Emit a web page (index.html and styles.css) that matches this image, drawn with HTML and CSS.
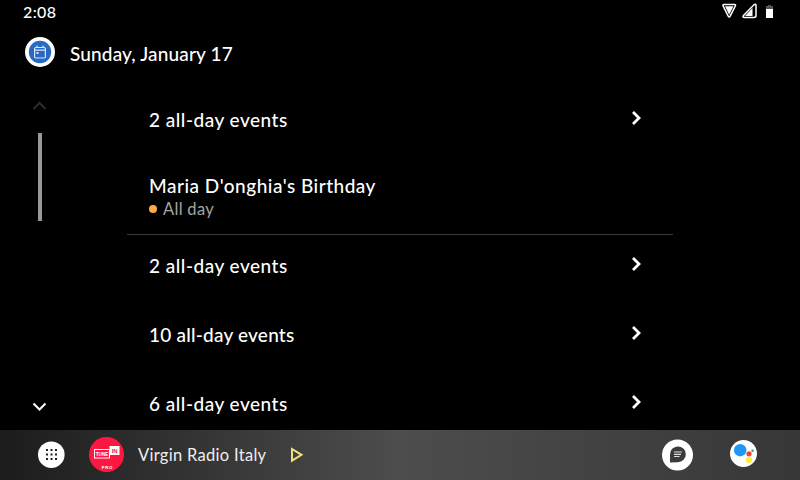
FILE: index.html
```html
<!DOCTYPE html>
<html lang="en">
<head>
<meta charset="utf-8">
<title>Calendar</title>
<link rel="stylesheet" href="styles.css">
</head>
<body>
<div class="screen">
  <header class="status">
    <span class="clock">2:08</span>
    <svg class="status-icons" width="56" height="24" viewBox="720 0 56 24">
      <path d="M724 4.500h10.400q1.800 0 .8 1.700l-5 10q-1 1.800-2 0l-5-10q-.8-1.700.8-1.700z" fill="#000" stroke="#fff" stroke-width="1.500"/>
      <path d="M725 6.200h8.400l-4.200 8.600z" fill="#fff"/>
      <path d="M754 4.700q1.800-1.300 2 .7v10.200q0 1.900-1.900 1.900h-9.600q-2.500-.2-1-2z" fill="#000" stroke="#fff" stroke-width="1.500"/>
      <path d="M745 16l7.500-8v8z" fill="#fff"/>
      <path d="M768 5h3v1h2v3h-7V6h2z" fill="#555"/>
      <path d="M766 9h7v9h-7z" fill="#fff"/>
    </svg>
  </header>
  <div class="title">
    <svg width="30" height="30" viewBox="0 0 30 30">
      <circle cx="15" cy="15" r="15" fill="#fff"/>
      <circle cx="15" cy="15" r="11.200" fill="#2869c1"/>
      <g fill="none" stroke="#d9e8fa" stroke-width="1.200"><rect x="9.600" y="10.500" width="10.800" height="10.500" rx="1.200"/><path d="M9.600 13.200h10.800M12 8.500v2M18 8.500v2"/></g>
      <path d="M11.500 15h2v2h-2z" fill="#d9e8fa"/>
    </svg>
    <h1>Sunday, January 17</h1>
  </div>
  <div class="body">
    <nav class="scroller">
      <svg width="16" height="10" viewBox="0 0 16 10"><path d="M1.500 8l6-6 6 6" fill="none" stroke="#2c2c2c" stroke-width="2"/></svg>
      <div class="thumb"></div>
      <svg class="down" width="16" height="10" viewBox="0 0 16 10"><path d="M1.500 1.500l6 6 6-6" fill="none" stroke="#fff" stroke-width="2"/></svg>
    </nav>
    <main class="events">
      <div class="row"><span class="label">2 all-day events</span><svg class="chevron" viewBox="0 0 12 16"><path d="M2 2l6 6-6 6"/></svg></div>
      <div class="event">
        <div class="label">Maria D'onghia's Birthday</div>
        <div class="when"><i class="dot"></i><span>All day</span></div>
      </div>
      <div class="row first"><span class="label">2 all-day events</span><svg class="chevron" viewBox="0 0 12 16"><path d="M2 2l6 6-6 6"/></svg></div>
      <div class="row"><span class="label ten">10 all-day events</span><svg class="chevron" viewBox="0 0 12 16"><path d="M2 2l6 6-6 6"/></svg></div>
      <div class="row"><span class="label">6 all-day events</span><svg class="chevron" viewBox="0 0 12 16"><path d="M2 2l6 6-6 6"/></svg></div>
    </main>
  </div>
  <footer class="dock">
    <svg class="apps" width="28" height="28" viewBox="0 0 28 28">
      <circle cx="14.300" cy="13.700" r="13.300" fill="#fff"/>
      <path d="M9 8h2v2H9zm4.500 0h2v2h-2zm4.500 0h2v2h-2zM9 12.500h2v2H9zm4.500 0h2v2h-2zm4.500 0h2v2h-2zM9 17h2v2H9zm4.500 0h2v2h-2zm4.500 0h2v2h-2z" fill="#222"/>
    </svg>
    <svg class="tunein" width="36" height="36" viewBox="0 0 36 36">
      <circle cx="17.500" cy="17.500" r="17.500" fill="#ff1744"/>
      <rect x="5.500" y="12.500" width="15" height="8.500" fill="none" stroke="#fff"/>
      <rect x="20.500" y="9" width="10" height="9" fill="#fff"/>
      <text x="6.800" y="19.200" font-size="6.200" textLength="12.500" lengthAdjust="spacingAndGlyphs" fill="#fff">TUNE</text>
      <text x="22.700" y="15.800" font-size="6.200" textLength="6" lengthAdjust="spacingAndGlyphs" fill="#ff1744">IN</text>
      <text x="12.800" y="32.300" font-size="4.300" textLength="10.500" fill="#fff">PRO</text>
    </svg>
    <span class="station">Virgin Radio Italy</span>
    <svg class="play" width="14" height="16" viewBox="0 0 14 16"><path d="M2 2v11.600L11.500 7.800z" fill="none" stroke="#efe07b" stroke-width="2"/></svg>
    <svg class="message" width="32" height="32" viewBox="0 0 32 32">
      <circle cx="15.500" cy="16" r="15.500" fill="#fff"/>
      <path d="M8 23.500V15.500a7.900 7.900 0 1 1 8 7.700z" fill="#3b3b3b"/>
      <path d="M12 13h8M12 15.300h7M12 17.500h5.500" stroke="#ddd" stroke-width="1.200"/>
    </svg>
    <svg class="assistant" width="28" height="28" viewBox="0 0 28 28">
      <circle cx="13.500" cy="13.500" r="13.500" fill="#fff"/>
      <circle cx="10.200" cy="10.200" r="6.200" fill="#2196f3"/>
      <circle cx="19" cy="13.800" r="2.600" fill="#f44336"/>
      <circle cx="19" cy="20" r="3.100" fill="#ffeb3b"/>
      <circle cx="22.600" cy="10.700" r="1.300" fill="#1db954"/>
    </svg>
  </footer>
</div>
</body>
</html>
```
FILE: styles.css
```css
* { box-sizing: border-box; }
body { margin: 0; background: #000; color: #fff; font-family: Lato, "Liberation Sans", sans-serif; }
.screen { width: 800px; height: 480px; display: flex; flex-direction: column; overflow: hidden; }
svg { display: block; flex: none; }
.status { height: 24px; padding: 0 24px 0 23px; display: flex; align-items: center; justify-content: space-between; }
.clock { margin-top: -1px; font-size: 16px; letter-spacing: 0.4px; font-weight: 500; }
.title { height: 61px; padding: 13px 0 0 25px; display: flex; align-items: flex-start; }
h1 { margin: 4px 0 0 15px; font-size: 19px; line-height: 26px; font-weight: 500; letter-spacing: 0.15px; white-space: nowrap; }
.body { height: 345px; display: flex; overflow: hidden; }
.scroller { width: 127px; padding: 16px 0 18px 32px; display: flex; flex-direction: column; }
.thumb { width: 4px; height: 88px; margin: 22px 0 0 6px; background: #999; }
.down { margin-top: auto; }
.events { width: 546px; }
.row { height: 69px; padding: 0 30px 0 22px; display: flex; align-items: center; justify-content: space-between; }
.row.first { height: 65px; padding-bottom: 4px; }
.label { font-size: 19px; line-height: 26px; font-weight: 500; letter-spacing: 0.5px; white-space: nowrap; }
.label.ten { letter-spacing: 0.22px; }
.chevron { width: 12px; height: 16px; margin-top: -3px; fill: none; stroke: #fff; stroke-width: 2.8; }
.event { height: 81px; padding: 19px 22px 0; border-bottom: 1px solid #3c3c3c; }
.when { display: flex; align-items: center; height: 20px; color: #a5a5a5; font-size: 16.5px; letter-spacing: 0.3px; }
.dot { width: 8px; height: 8px; margin-right: 6px; border-radius: 50%; background: #ffab40; }
.dock { height: 50px; padding-left: 37px; display: flex; align-items: center; background: linear-gradient(90deg, #1c1c1c, #4d4d4d 50%, #373737); }
.tunein { margin-left: 24px; font-family: "Liberation Sans", sans-serif; font-weight: 700; }
.station { width: 129px; margin-left: 13px; font-size: 16.5px; letter-spacing: 0.3px; color: #eee; white-space: nowrap; }
.play { margin-left: 23px; }
.message { margin-left: 358px; }
.assistant { margin: -2px 0 0 36px; }
```
